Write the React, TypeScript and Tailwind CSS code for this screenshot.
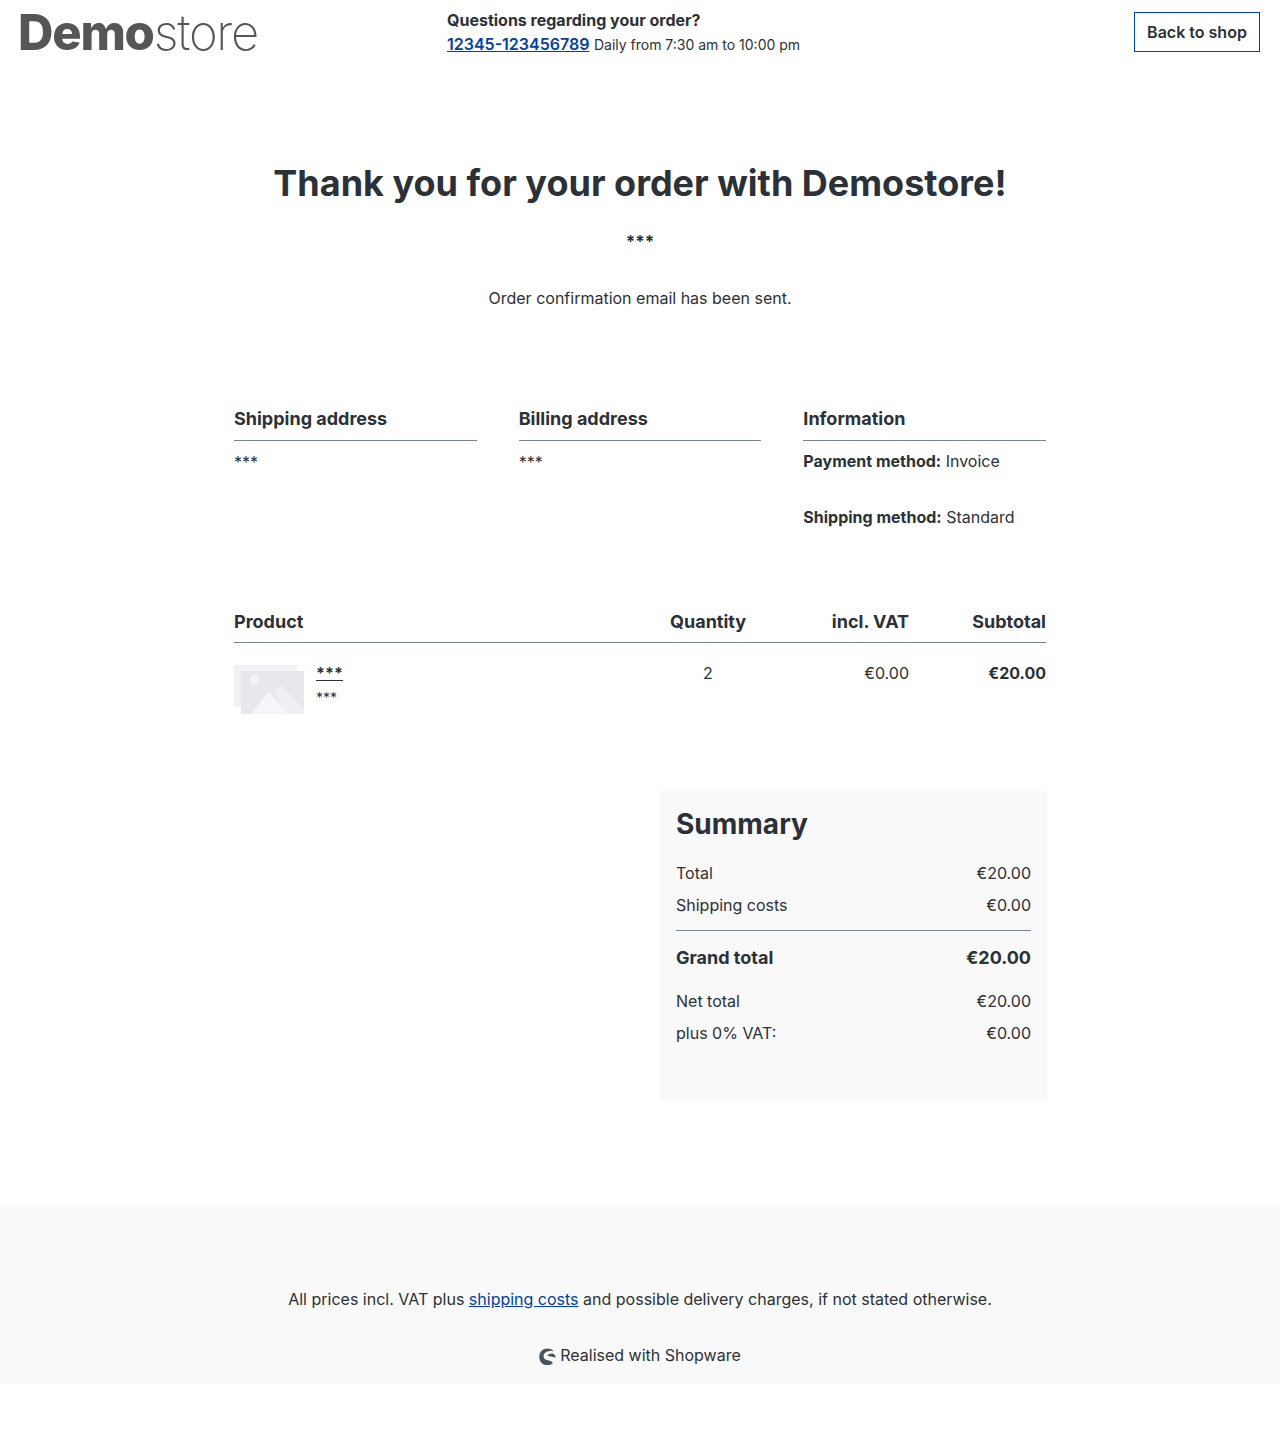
const InterFont = "font-['Inter',sans-serif]";

const PlaceholderImage = () => (
  <svg width="70" height="49" viewBox="0 0 70 49" className="shrink-0">
    <rect x="0" y="0" width="63" height="42" fill="#f0f0f5" />
    <rect x="7" y="6" width="63" height="43" fill="#e7e7ec" />
    <circle cx="20.5" cy="14.5" r="4.7" fill="#f3f3f8" />
    <path d="M47 20 L70 44 L70 49 L50 49 L41 26 Z" fill="#eeeef3" />
    <path d="M17 49 L34.5 26.5 L54 49 Z" fill="#f5f5fa" />
  </svg>
);

const ShopwareLogo = () => (
  <svg width="17" height="17" viewBox="0 0 17 17" className="mt-[3px]">
    <path
      d="M8.6 0.6 C10.8 0.6 12.9 1.3 14.4 2.6 L14.2 3.2 C13.2 2.9 12 2.8 10.9 2.9 C6.9 3.2 4.6 5.4 4.6 8.2 C4.6 10.4 6.2 11.7 8.9 12.3 C11.2 12.8 13 13.4 13.9 15.2 C12.5 16.5 10.6 17.2 8.5 17.2 C3.8 17.2 0.3 13.7 0.3 8.9 C0.3 4.1 3.8 0.6 8.6 0.6 Z"
      fill="#47545e"
    />
    <path
      d="M8.4 7.4 C9.2 6 11.2 5.3 13.2 5.4 C14.8 5.5 15.9 6.6 16.7 9 C16.8 9.5 16.5 9.6 16.1 9.4 C13.8 8.3 10 8.7 8.4 7.4 Z"
      fill="#47545e"
    />
  </svg>
);

const SummaryRow = ({ label, value }: { label: string; value: string }) => (
  <div className="flex h-8 items-center justify-between">
    <span>{label}</span>
    <span>{value}</span>
  </div>
);

const App = () => {
  return (
    <div className={`${InterFont} min-h-[1440px] bg-white text-base text-[#2b3136]`}>
      <header className="flex h-[64px] items-start justify-between pl-[18px] pr-5 pt-3">
        <div className="mt-[-7px] flex w-[429px] text-[49px] leading-[56px] tracking-[-0.025em] text-[#565656]">
          <span className="font-extrabold">Demo</span>
          <span className="font-extralight">store</span>
        </div>
        <div className="mr-auto">
          <div className="text-base font-bold leading-4">Questions regarding your order?</div>
          <div className="mt-[4px] leading-6">
            <a href="#" className="font-semibold text-[#0042a0] underline">
              12345-123456789
            </a>{" "}
            <span className="text-sm">Daily from 7:30 am to 10:00 pm</span>
          </div>
        </div>
        <button className="h-10 w-[126px] border border-[#0042a0] text-base font-semibold">
          Back to shop
        </button>
      </header>

      <main className="mx-auto w-[812px]">
        <div className="pt-[92px] text-center">
          <h1 className="text-[36px] font-bold leading-[54px]">Thank you for your order with Demostore!</h1>
          <div className="mt-[20px] text-[17px] font-bold leading-6">***</div>
          <p className="mt-[32px] leading-6">Order confirmation email has been sent.</p>
        </div>

        <div className="mt-[95px] grid grid-cols-3 gap-x-[42px]">
          <div>
            <h3 className="border-b border-[#798490] pb-2 text-lg font-bold leading-[27px]">Shipping address</h3>
            <p className="mt-[9px] leading-6">***</p>
          </div>
          <div>
            <h3 className="border-b border-[#798490] pb-2 text-lg font-bold leading-[27px]">Billing address</h3>
            <p className="mt-[9px] leading-6">***</p>
          </div>
          <div>
            <h3 className="border-b border-[#798490] pb-2 text-lg font-bold leading-[27px]">Information</h3>
            <p className="mt-2 leading-6">
              <span className="font-bold">Payment method:</span> Invoice
            </p>
            <p className="mt-8 leading-6">
              <span className="font-bold">Shipping method:</span> Standard
            </p>
          </div>
        </div>

        <div className="mt-[79px] flex border-b border-[#798490] pb-[7px] text-lg font-bold leading-[27px]">
          <div className="flex-1">Product</div>
          <div className="w-[76px] text-center">Quantity</div>
          <div className="w-[163px] text-right">incl. VAT</div>
          <div className="w-[137px] text-right">Subtotal</div>
        </div>
        <div className="flex pt-[22px]">
          <div className="flex flex-1 gap-3">
            <PlaceholderImage />
            <div>
              <div className="w-fit border-b border-[#2b3136] pt-px text-base font-bold leading-[14px]">***</div>
              <div className="mt-[9px] text-sm leading-[16px]">***</div>
            </div>
          </div>
          <div className="w-[76px] text-center leading-4">2</div>
          <div className="w-[163px] text-right leading-4">€0.00</div>
          <div className="w-[137px] text-right font-bold leading-4">€20.00</div>
        </div>

        <div className="ml-auto mr-[-1px] mt-[77px] h-[310px] w-[387px] bg-[#f9f9f9] px-4 pt-4">
          <h2 className="text-[28px] font-bold leading-[34px]">Summary</h2>
          <div className="mt-[16px]">
            <SummaryRow label="Total" value="€20.00" />
            <SummaryRow label="Shipping costs" value="€0.00" />
          </div>
          <div className="mt-[9px] flex h-[54px] items-center justify-between border-t border-[#798490] text-lg font-bold">
            <span>Grand total</span>
            <span>€20.00</span>
          </div>
          <div className="mt-[1px]">
            <SummaryRow label="Net total" value="€20.00" />
            <SummaryRow label="plus 0% VAT:" value="€0.00" />
          </div>
        </div>
      </main>

      <footer className="mt-[106px] h-[176px] bg-[#f9f9f9] pt-[80px] text-center leading-6">
        <p>
          All prices incl. VAT plus{" "}
          <a href="#" className="text-[#0042a0] underline">
            shipping costs
          </a>{" "}
          and possible delivery charges, if not stated otherwise.
        </p>
        <div className="mt-8 flex items-center justify-center gap-[4px]">
          <ShopwareLogo />
          <span>Realised with Shopware</span>
        </div>
      </footer>
    </div>
  );
};

export default App;
